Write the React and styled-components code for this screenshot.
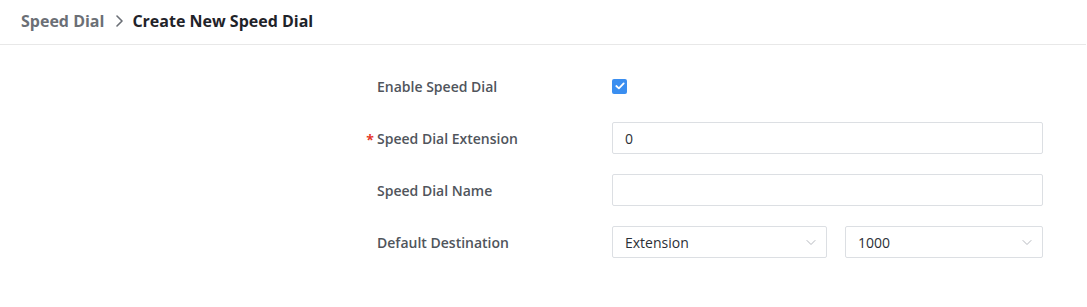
import styled, { createGlobalStyle } from "styled-components";

const GlobalStyle = createGlobalStyle`
  body {
    margin: 0;
    background: #ffffff;
    font-family: "Open Sans", "Noto Sans", sans-serif;
  }
`;

function Chevron({ size = 10, color = "#6b6f76", dir = "right" }) {
  const d = dir === "right" ? "M3 1 L8 6 L3 11" : "M1 1.5 L5 5.5 L9 1.5";
  return (
    <svg width={size} height={dir === "right" ? 12 : 7} viewBox={dir === "right" ? "0 0 10 12" : "0 0 10 7"} fill="none">
      <path d={d} stroke={color} strokeWidth={dir === "right" ? 1.6 : 1} strokeLinecap="round" strokeLinejoin="round" />
    </svg>
  );
}

export default function App() {
  return (
    <>
      <GlobalStyle />
      <Page>
        <Breadcrumb>
          <Crumb>Speed Dial</Crumb>
          <Sep>
            <Chevron />
          </Sep>
          <Crumb $current>Create New Speed Dial</Crumb>
        </Breadcrumb>

        <Form>
          <Row>
            <Label>Enable Speed Dial</Label>
            <Control>
              <Checkbox>
                <svg width="10" height="8" viewBox="0 0 10 8" fill="none">
                  <path d="M1.3 4 L3.9 6.4 L8.7 1.4" stroke="#fff" strokeWidth="1.8" strokeLinecap="round" strokeLinejoin="round" />
                </svg>
              </Checkbox>
            </Control>
          </Row>

          <Row>
            <Label $required>Speed Dial Extension</Label>
            <Control>
              <Input $width={431}>0</Input>
            </Control>
          </Row>

          <Row>
            <Label>Speed Dial Name</Label>
            <Control>
              <Input $width={431} />
            </Control>
          </Row>

          <Row>
            <Label>Default Destination</Label>
            <Control>
              <Select $width={215}>
                <span>Extension</span>
                <Chevron dir="down" color="#b5b8be" />
              </Select>
              <Select $width={198}>
                <span>1000</span>
                <Chevron dir="down" color="#b5b8be" />
              </Select>
            </Control>
          </Row>
        </Form>
      </Page>
    </>
  );
}

const Page = styled.div`
  width: 1087px;
  height: 307px;
  background: #ffffff;
`;

const Breadcrumb = styled.div`
  display: flex;
  align-items: center;
  height: 45px;
  padding-left: 21px;
  padding-bottom: 2px;
  box-sizing: border-box;
  border-bottom: 1px solid #e8e8e8;
  width: 1086px;
`;

const Crumb = styled.span`
  font-size: 16px;
  font-weight: 700;
  color: ${(p) => (p.$current ? "#1f2329" : "#6b6f76")};
`;

const Sep = styled.span`
  display: flex;
  align-items: center;
  margin: 0 8px 0 10px;
`;

const Form = styled.div`
  display: flex;
  flex-direction: column;
  gap: 20px;
  padding: 25px 0 0 366px;
`;

const Row = styled.div`
  display: flex;
  align-items: center;
  height: 32px;
`;

const Label = styled.div`
  width: 246px;
  display: flex;
  align-items: center;
  font-size: 14px;
  font-weight: 600;
  color: #50555c;

  &::before {
    content: "${(p) => (p.$required ? "*" : "")}";
    width: 11px;
    padding-right: 3px;
    box-sizing: border-box;
    text-align: right;
    color: #e5382b;
    font-weight: 700;
    font-size: 14px;
    line-height: 1;
    position: relative;
    top: 2px;
  }
`;

const Control = styled.div`
  display: flex;
  align-items: center;
  gap: 18px;
`;

const Checkbox = styled.div`
  width: 15px;
  height: 15px;
  border-radius: 2px;
  background: #3a8ef0;
  display: flex;
  align-items: center;
  justify-content: center;
`;

const Input = styled.div`
  width: ${(p) => p.$width}px;
  height: 32px;
  box-sizing: border-box;
  border: 1px solid #dcdfe3;
  border-radius: 2px;
  padding: 0 12px;
  display: flex;
  align-items: center;
  font-size: 14px;
  color: #2b2f36;
`;

const Select = styled(Input)`
  justify-content: space-between;
  padding-right: 10px;
`;
